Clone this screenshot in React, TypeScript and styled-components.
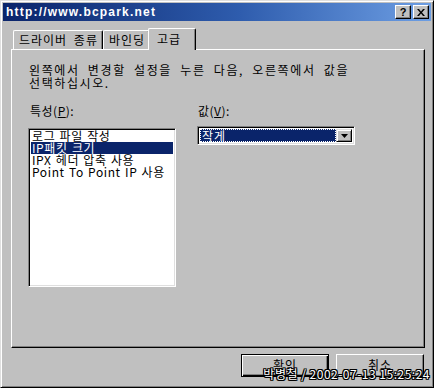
import React from "react";
import styled, { createGlobalStyle } from "styled-components";

const GlobalStyle = createGlobalStyle`
    html, body {
        margin: 0;
        padding: 0;
        background: #c0c0c0;
    }
    body {
        font-family: "Noto Sans CJK KR", "Liberation Sans", sans-serif;
        font-size: 12px;
    }
`;

const KR = `"Noto Sans CJK KR", "DejaVu Sans", sans-serif`;

// Window frame
const Window = styled.div`
    position: relative;
    box-sizing: border-box;
    width: 434px;
    height: 388px;
    display: flex;
    flex-direction: column;
    background: #c0c0c0;
    border: 1px solid;
    border-color: #dfdfdf #000 #000 #dfdfdf;
    box-shadow: inset 1px 1px 0 #fff, inset -1px -1px 0 #808080;
    padding: 2px;
`;

const TitleBar = styled.div`
    height: 18px;
    display: flex;
    align-items: center;
    justify-content: space-between;
    padding: 0 2px 0 3px;
    background: linear-gradient(to right, #0a246a, #2e5cad 55%, #6d9ee3);
`;

const Title = styled.span`
    color: #fff;
    font-family: "Liberation Sans", Arial, sans-serif;
    font-weight: bold;
    font-size: 12px;
    letter-spacing: 1.2px;
`;

const TitleButtons = styled.div`
    display: flex;
    gap: 2px;
`;

const TitleButton = styled.div`
    width: 16px;
    height: 14px;
    box-sizing: border-box;
    display: flex;
    align-items: center;
    justify-content: center;
    background: #c0c0c0;
    border: 1px solid;
    border-color: #fff #000 #000 #fff;
    box-shadow: inset -1px -1px 0 #808080;
    font-family: "Liberation Sans", Arial, sans-serif;
    font-weight: bold;
    font-size: 11px;
    color: #000;
`;

const Body = styled.div`
    flex: 1;
    display: flex;
    flex-direction: column;
    padding: 6px 7px 0 8px;
`;

// Tabs
const TabRow = styled.div`
    display: flex;
    align-items: flex-end;
    height: 22px;
    padding-left: 2px;
    position: relative;
    z-index: 1;
`;

const Tab = styled.div<{ $active?: boolean }>`
    box-sizing: border-box;
    height: ${(p) => (p.$active ? "22px" : "19px")};
    margin: ${(p) => (p.$active ? "0 -2px -1px -2px" : "0")};
    padding: ${(p) => (p.$active ? "3px 14px 0 8px" : "2px 4px 0 5px")};
    background: #c0c0c0;
    border-top: 1px solid #fff;
    border-left: 1px solid #fff;
    border-right: 1px solid #000;
    border-top-left-radius: 2px;
    border-top-right-radius: 2px;
    box-shadow: inset -1px 0 0 #808080;
    font-family: ${KR};
    font-size: 12px;
    line-height: 14px;
    letter-spacing: 1px;
    word-spacing: 3px;
    color: #000;
    white-space: nowrap;
`;

const Panel = styled.div`
    box-sizing: border-box;
    width: 414px;
    height: 299px;
    background: #c0c0c0;
    border: 1px solid;
    border-color: #fff #000 #000 #fff;
    box-shadow: inset -1px -1px 0 #808080;
    padding: 13px 16px 0 17px;
    display: flex;
    flex-direction: column;
`;

const Intro = styled.p`
    margin: 0;
    font-family: ${KR};
    font-size: 12px;
    line-height: 13px;
    letter-spacing: 1.6px;
    word-spacing: 4px;
    color: #000;
`;

const Columns = styled.div`
    display: flex;
    gap: 21px;
    margin-top: 16px;
`;

const Column = styled.div`
    display: flex;
    flex-direction: column;
`;

const Label = styled.div`
    font-family: ${KR};
    font-size: 12px;
    line-height: 12px;
    height: 12px;
    letter-spacing: 0.5px;
    color: #000;
    margin-bottom: 11px;
    margin-left: 1px;
    u {
        text-decoration-thickness: 1px;
        text-underline-offset: 1px;
    }
`;

const ListBox = styled.div`
    box-sizing: border-box;
    width: 148px;
    height: 159px;
    background: #fff;
    border: 1px solid;
    border-color: #808080 #fff #fff #808080;
    box-shadow: inset 1px 1px 0 #000, inset -1px -1px 0 #dfdfdf;
    padding: 1px 2px 2px 2px;
    margin-left: -1px;
`;

const ListItem = styled.div<{ $selected?: boolean }>`
    height: 12px;
    line-height: 12px;
    padding-left: 1px;
    font-family: ${KR};
    font-size: 12px;
    letter-spacing: 0.6px;
    word-spacing: 1px;
    white-space: nowrap;
    background: ${(p) => (p.$selected ? "#0a246a" : "transparent")};
    color: ${(p) => (p.$selected ? "#fff" : "#000")};
`;

const Combo = styled.div`
    box-sizing: border-box;
    width: 158px;
    height: 19px;
    background: #fff;
    border: 1px solid;
    border-color: #808080 #fff #fff #808080;
    box-shadow: inset 1px 1px 0 #000, inset -1px -1px 0 #dfdfdf;
    padding: 2px;
    display: flex;
    margin-top: -2px;
`;

const ComboValue = styled.div`
    flex: 1;
    background: #0a246a;
    color: #fff;
    outline: 1px dotted #fff;
    outline-offset: -1px;
    font-family: ${KR};
    font-size: 12px;
    line-height: 13px;
    letter-spacing: 1px;
    padding-left: 2px;
`;

const ComboArrow = styled.div`
    width: 16px;
    box-sizing: border-box;
    background: #c0c0c0;
    border: 1px solid;
    border-color: #dfdfdf #000 #000 #dfdfdf;
    box-shadow: inset 1px 1px 0 #fff, inset -1px -1px 0 #808080;
    display: flex;
    align-items: center;
    justify-content: center;
`;

const Footer = styled.div`
    display: flex;
    justify-content: flex-end;
    gap: 7px;
    margin-top: 6px;
`;

const Button = styled.div<{ $default?: boolean }>`
    box-sizing: border-box;
    width: 88px;
    height: 23px;
    display: flex;
    align-items: center;
    justify-content: center;
    padding-bottom: 2px;
    background: #c0c0c0;
    border: 1px solid;
    border-color: ${(p) => (p.$default ? "#000" : "#fff #000 #000 #fff")};
    box-shadow: ${(p) =>
        p.$default
            ? "inset 1px 1px 0 #fff, inset -1px -1px 0 #000, inset -2px -2px 0 #808080"
            : "inset -1px -1px 0 #808080"};
    font-family: ${KR};
    font-size: 12px;
    letter-spacing: 1px;
    color: #000;
`;

// Watermark laid over the lower right corner
const Watermark = styled.div`
    position: absolute;
    right: 3px;
    bottom: 6px;
    font-family: ${KR};
    font-size: 12px;
    line-height: 14px;
    color: #fff;
    letter-spacing: 0.5px;
    text-shadow: 1px 0 0 #000, -1px 0 0 #000, 0 1px 0 #000, 0 -1px 0 #000,
        1px 1px 0 #000, -1px -1px 0 #000, 1px -1px 0 #000, -1px 1px 0 #000;
`;

const items = ["로그 파일 작성", "IP패킷 크기", "IPX 헤더 압축 사용", "Point To Point IP 사용"];

export default function App() {
    return (
        <>
            <GlobalStyle />
            <Window>
                <TitleBar>
                    <Title>http://www.bcpark.net</Title>
                    <TitleButtons>
                        <TitleButton>?</TitleButton>
                        <TitleButton>
                            <svg width="8" height="7" viewBox="0 0 8 7">
                                <path d="M0 0h2l2 2.5L6 0h2L5 3.5 8 7H6L4 4.5 2 7H0l3-3.5z" fill="#000" />
                            </svg>
                        </TitleButton>
                    </TitleButtons>
                </TitleBar>
                <Body>
                    <TabRow>
                        <Tab>드라이버 종류</Tab>
                        <Tab>바인딩</Tab>
                        <Tab $active>고급</Tab>
                    </TabRow>
                    <Panel>
                        <Intro>
                            왼쪽에서 변경할 설정을 누른 다음, 오른쪽에서 값을
                            <br />
                            선택하십시오.
                        </Intro>
                        <Columns>
                            <Column>
                                <Label>
                                    특성(<u>P</u>):
                                </Label>
                                <ListBox>
                                    {items.map((it, i) => (
                                        <ListItem key={it} $selected={i === 1}>
                                            {it}
                                        </ListItem>
                                    ))}
                                </ListBox>
                            </Column>
                            <Column>
                                <Label>
                                    값(<u>V</u>):
                                </Label>
                                <Combo>
                                    <ComboValue>작게</ComboValue>
                                    <ComboArrow>
                                        <svg width="7" height="4" viewBox="0 0 7 4">
                                            <path d="M0 0h7L3.5 4z" fill="#000" />
                                        </svg>
                                    </ComboArrow>
                                </Combo>
                            </Column>
                        </Columns>
                    </Panel>
                    <Footer>
                        <Button $default>확인</Button>
                        <Button>취소</Button>
                    </Footer>
                </Body>
                <Watermark>박병철 / 2002-07-13 15:25:24</Watermark>
            </Window>
        </>
    );
}
